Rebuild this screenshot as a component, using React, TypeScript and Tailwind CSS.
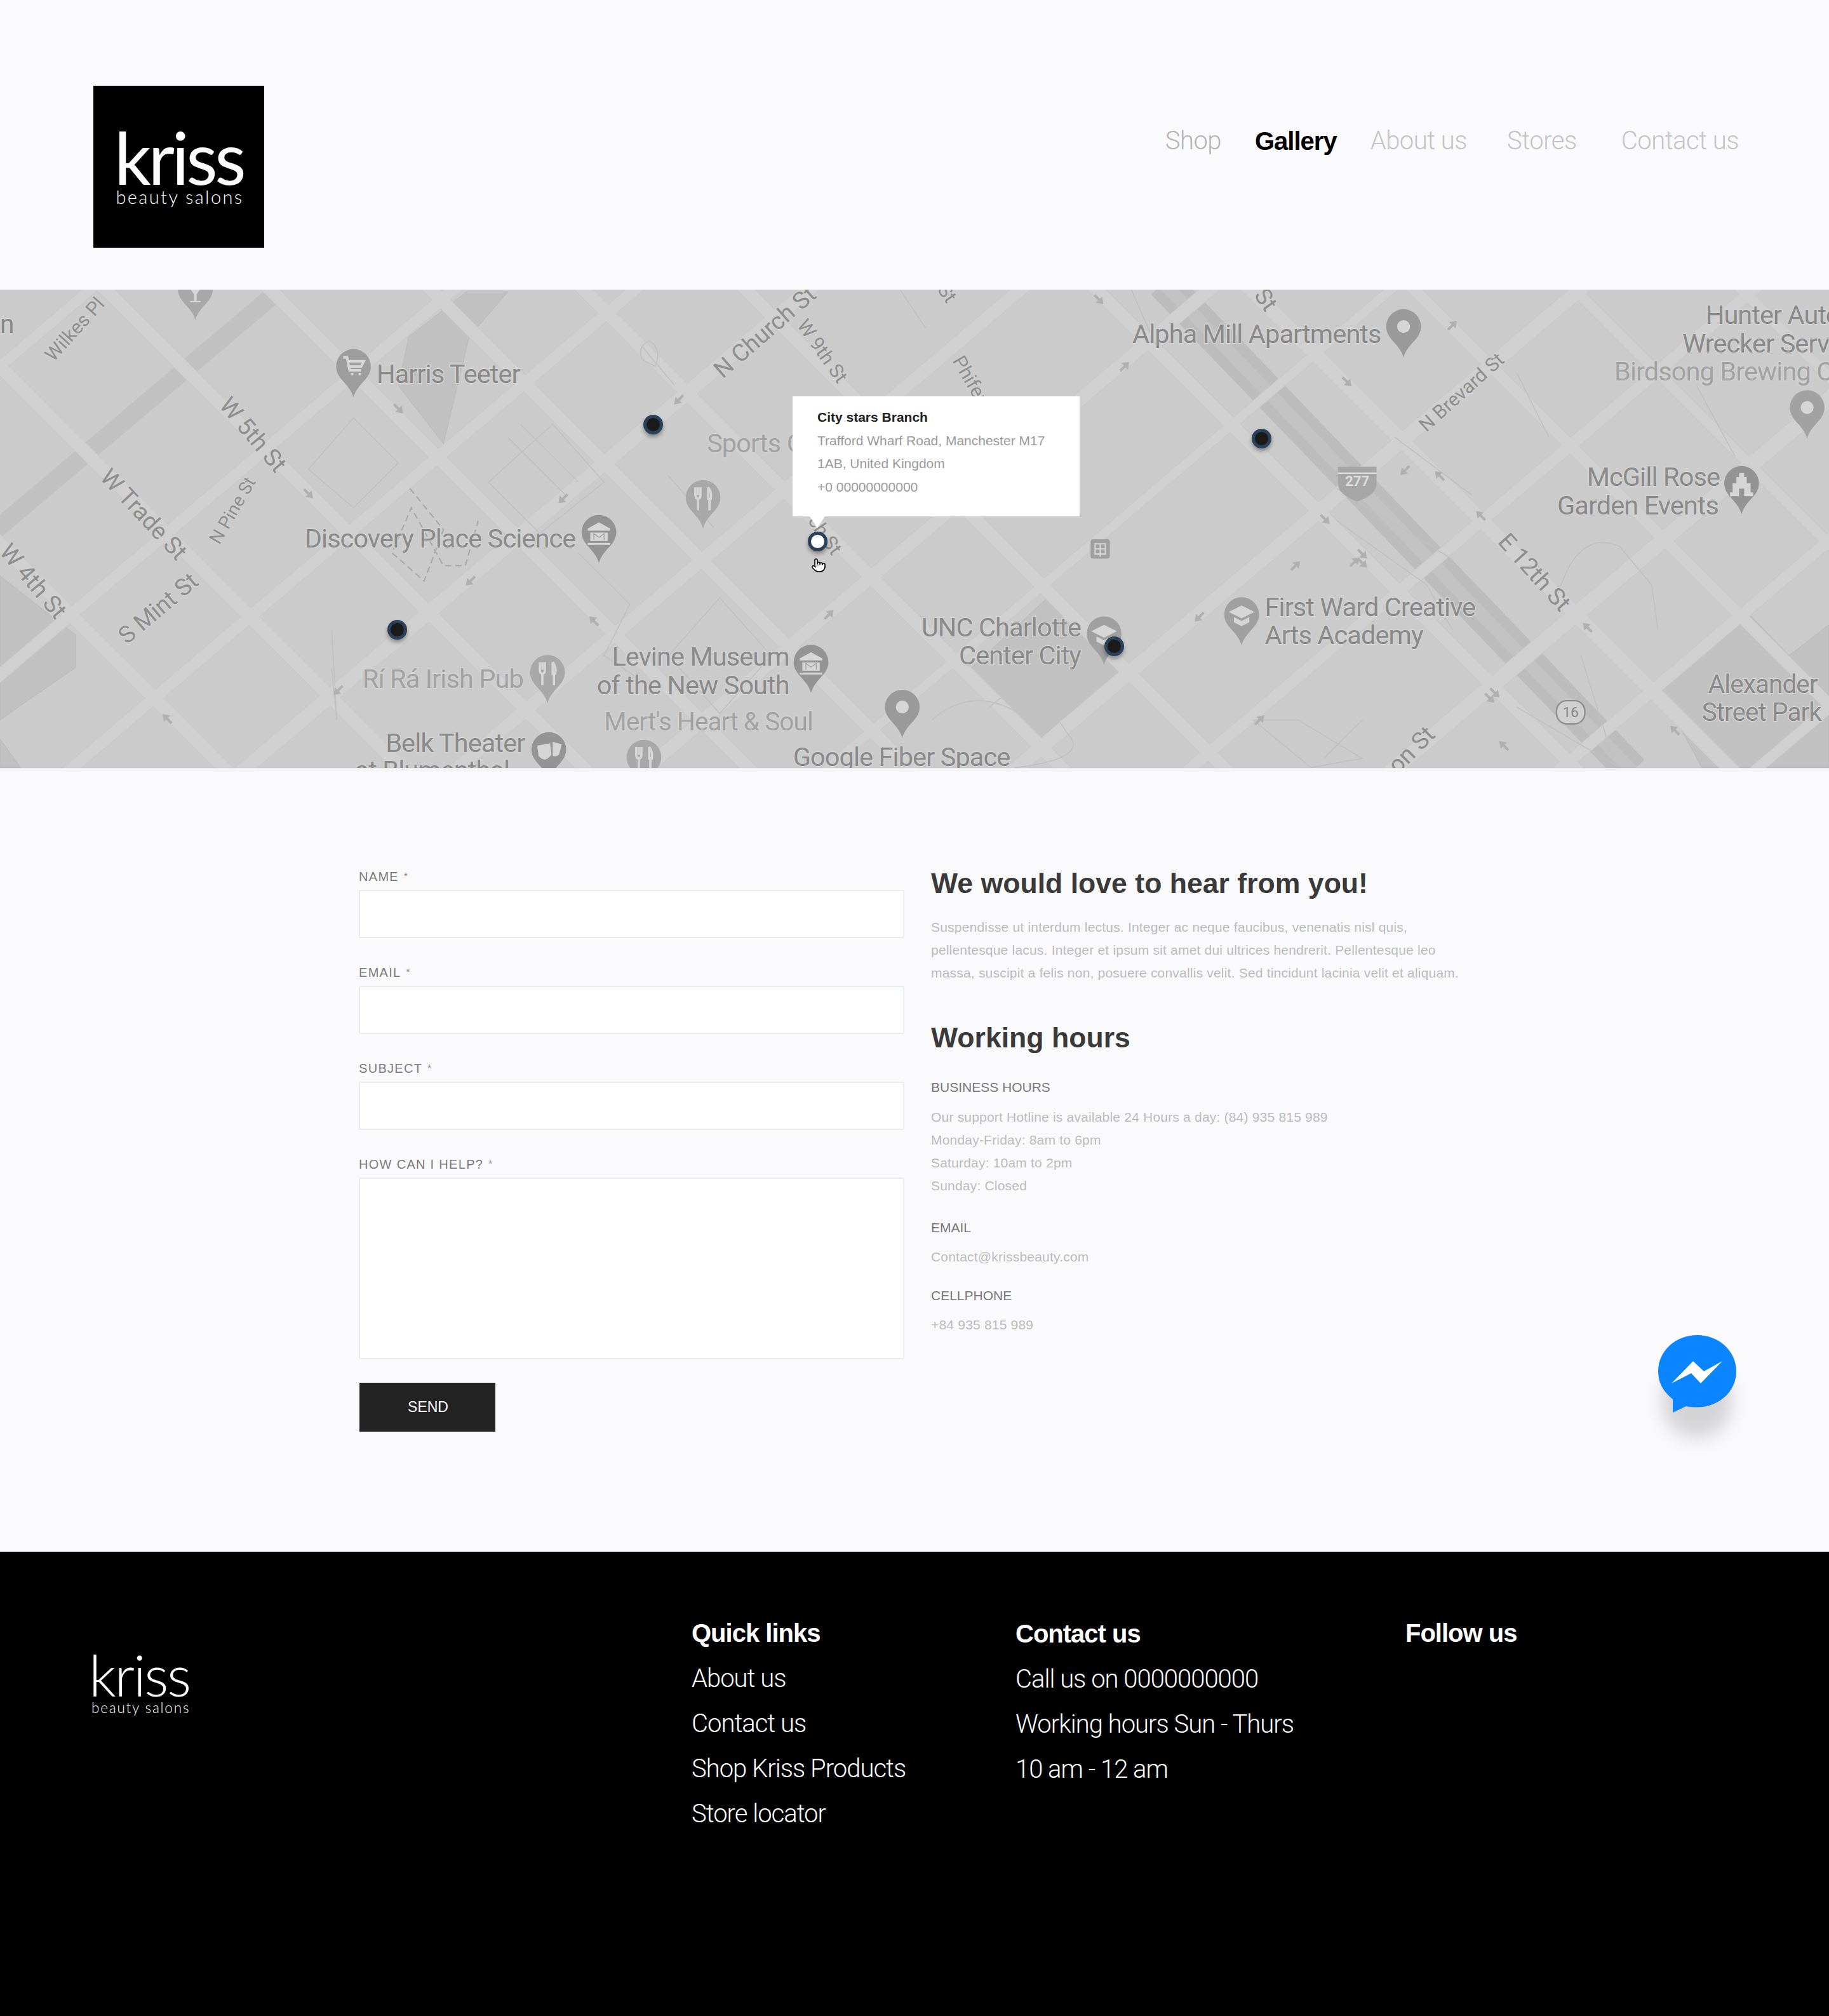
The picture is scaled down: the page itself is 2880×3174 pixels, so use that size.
import { Pointer } from "lucide-react";

const sans = "font-['Liberation_Sans',Arial,sans-serif]";

const familyA = [
  [423, 10], [285, 10], [143, 10], [15, 10], [-110, 10], [-229, 10], [-355, 10], [-628, 10], [-748, 11], [-875, 9], [-1000, 8], [-1130, 8],
];
const familyB = [
  [525, 9], [645, 9], [760, 11], [900, 10], [1025, 10], [1145, 7], [1270, 11], [1385, 9], [1520, 12], [1630, 9], [1760, 8], [285, 8],
];

const areas = [
  "0,448 59,494 59,519 0,560",
  "318,262 363,227 395,227 365,262 345,345 310,300",
  "816,464 875,520 807,576 752,523",
  "1360,477 1392,510 1423,486 1423,597 1324,597 1292,538",
  "0,575 16,597 0,597",
];

const thin = [
  "M258 490 L262 560 L258 520",
  "M700 225 L720 255 M500 270 L525 300",
  "M1040 405 L1110 455 L1130 490 M1040 380 L1130 435 M1145 385 L1085 340",
  "M1210 470 Q1225 410 1260 425 L1285 455 L1290 490 M1010 560 L1060 590 L1020 597 L975 560 Z",
  "M240 365 L275 325 L310 360 L275 395 Z M430 330 L380 375 L420 415 L470 375 Z M395 340 L440 385 M405 330 L450 375",
  "M560 465 L600 510 L560 555 L520 510 Z M450 430 L490 470 L470 510 L500 530 M520 370 L555 410",
  "M770 550 Q800 520 830 570 Q850 590 790 597 M725 560 Q760 530 800 560 M1180 290 L1205 340 M1320 300 L1350 355",
  "M900 270 L880 225 M1030 590 L1060 560 M500 280 Q495 270 505 265 Q515 270 510 285 Z M1180 550 L1260 597 M1230 510 L1255 590",
];

const labels: [string, number, number, number, string, string?][] = [
  ["Harris Teeter", 293, 298, 20.5, "start"],
  ["Alpha Mill Apartments", 881, 267, 20.5, "start"],
  ["Discovery Place Science", 237, 426, 20.5, "start"],
  ["Sports C", 550, 352, 20.5, "start", "#a2a2a2"],
  ["Levine Museum", 614, 518, 20.5, "end"],
  ["of the New South", 614, 540, 20.5, "end"],
  ["Mert's Heart & Soul", 470, 568, 20, "start", "#a2a2a2"],
  ["Rí Rá Irish Pub", 282, 535, 20.5, "start", "#a2a2a2"],
  ["Belk Theater", 300, 585, 20.5, "start"],
  ["at Blumenthal", 276, 606, 20.5, "start"],
  ["UNC Charlotte", 841, 495, 20.5, "end"],
  ["Center City", 841, 517, 20.5, "end"],
  ["First Ward Creative", 984, 479, 20.5, "start"],
  ["Arts Academy", 984, 501, 20.5, "start"],
  ["Google Fiber Space", 617, 596, 20.5, "start"],
  ["McGill Rose", 1338, 378, 20.5, "end"],
  ["Garden Events", 1337, 400, 20.5, "end"],
  ["Hunter Auto", 1327, 252, 20.5, "start"],
  ["Wrecker Serv", 1309, 274, 20.5, "start"],
  ["Birdsong Brewing C", 1256, 296, 20.5, "start", "#a2a2a2"],
  ["Alexander", 1329, 539, 20, "start"],
  ["Street Park", 1324, 561, 20, "start"],
  ["n", 0, 259, 20, "start"],
];

const streets: [string, number, number, number, number][] = [
  ["Wilkes Pl", 58, 256, -48, 15],
  ["W 5th St", 197, 338, 50, 18.5],
  ["W Trade St", 112, 400, 47, 18.5],
  ["N Pine St", 181, 397, -60, 14],
  ["W 4th St", 26, 452, 50, 18.5],
  ["S Mint St", 123, 473, -40, 18.5],
  ["N Church St", 595, 258, -41, 18.5],
  ["W 9th St", 640, 273, 55, 15],
  ["Phifer", 755, 295, 60, 15],
  ["N Brevard St", 1137, 305, -42, 15],
  ["E 12th St", 1194, 445, 48, 18.5],
  ["on St", 1098, 583, -45, 18.5],
  ["St", 985, 233, 55, 18],
  ["St", 737, 228, 55, 15],
  ["ch St", 642, 416, 55, 15],
];

const arrows: [number, number, number][] = [
  [240, 384, 135], [310, 318, 135], [528, 311, 225], [438, 388, 225], [366, 452, 225], [263, 537, 225],
  [462, 483, 315], [130, 559, 315], [645, 478, 45], [855, 233, 135], [875, 285, 45], [1130, 253, 45],
  [1120, 370, 315], [1093, 366, 225], [1152, 401, 315], [1031, 404, 135], [1060, 431, 135], [1054, 437, 45],
  [1060, 438, 135], [1008, 440, 45], [933, 480, 225], [1235, 488, 315], [1163, 539, 135], [1159, 543, 135],
  [980, 560, 45], [1303, 568, 315], [1170, 580, 315], [1048, 297, 135],
];

const pins: [number, number, string, string][] = [
  [275, 286, "cart", "#9d9d9d"],
  [1092, 255, "dot", "#9a9a9a"],
  [466, 415, "museum", "#949494"],
  [631, 516, "museum", "#949494"],
  [426, 524, "fork", "#a8a8a8"],
  [427, 584, "theater", "#949494"],
  [547, 388, "fork", "#a8a8a8"],
  [501, 590, "fork", "#a8a8a8"],
  [859, 494, "grad", "#a0a0a0"],
  [966, 479, "grad", "#a0a0a0"],
  [702, 551, "dot", "#9a9a9a"],
  [1355, 377, "castle", "#949494"],
  [1406, 318, "dot", "#a2a2a2"],
  [152, 226, "dot2", "#a8a8a8"],
];

function PinIcon({ kind }: { kind: string }) {
  if (kind === "dot") return <circle cx="0" cy="-1" r="5" fill="#d6d6d6" />;
  if (kind === "dot2") return <path d="M-5 -3 H5 L1 3 V8 H4 V9 H-4 V8 H-1 V3 Z" fill="#d6d6d6" />;
  if (kind === "cart")
    return <path d="M-8 -8 H-5 L-3 2 H6 M-4 -5 H8 L6 -1 H-3 M-2 5 h2 M4 5 h2" stroke="#d6d6d6" strokeWidth="2" fill="none" />;
  if (kind === "museum")
    return <path d="M0 -9 L9 -4 V-2 H-9 V-4 Z M-7 -1 H7 V6 H-7 Z M-9 7 H9 V9 H-9 Z M-4 5 V0 L0 3 L4 0 V5" fill="#d6d6d6" stroke="#949494" strokeWidth="0.5" />;
  if (kind === "fork")
    return <path d="M-6 -9 V-3 Q-6 0 -4 0 V9 M-4 -9 V-3 M-2 -9 V-3 Q-2 0 -4 0 M4 -9 Q7 -5 6 0 H4 V-9 M5 0 V9" stroke="#d6d6d6" strokeWidth="1.8" fill="none" />;
  if (kind === "theater")
    return <path d="M-9 -4 L1 -6 L2 3 Q-3 10 -8 4 Z M3 -7 L10 -5 L8 3 Q6 5 3 4 Z" fill="#d6d6d6" />;
  if (kind === "grad")
    return <path d="M0 -8 L10 -3 L0 2 L-10 -3 Z M-6 1 V5 L0 8 L6 5 V1 L0 4 Z" fill="#d6d6d6" />;
  return <path d="M-2 -9 H2 V-6 H4 V-1 H7 V6 H9 V9 H-9 V6 H-7 V-1 H-4 V-6 H-2 Z M-2 3 V9 H2 V3 Z" fill="#d6d6d6" fillRule="evenodd" />;
}

function MapDrawing() {
  return (
    <svg viewBox="0 225.3 1423 372" width="2880" height="753" className="block" style={{ fontFamily: "Roboto, sans-serif" }}>
      <rect x="0" y="225" width="1423" height="373" fill="#cbcbcb" />
      {areas.map((p) => (
        <polygon key={p} points={p} fill="#c1c1c1" stroke="#bababa" strokeWidth="0.5" />
      ))}
      <line x1="218" y1="225" x2="-10" y2="418" stroke="#c1c1c1" strokeWidth="14" />
      <line x1="905" y1="220" x2="1270" y2="600" stroke="#bcbcbc" strokeWidth="26" />
      <line x1="905" y1="220" x2="1270" y2="600" stroke="#c2c2c2" strokeWidth="10" />
      {familyA.map(([c, w]) => (
        <line key={c} x1={200 - c} y1={200} x2={620 - c} y2={620} stroke="#c7c7c7" strokeWidth={w + 0.8} />
      ))}
      {familyB.map(([d, w]) => (
        <line key={d} x1={(d - 200) / 0.85} y1={200} x2={(d - 620) / 0.85} y2={620} stroke="#c7c7c7" strokeWidth={w + 0.8} />
      ))}
      {familyA.map(([c, w]) => (
        <line key={c} x1={200 - c} y1={200} x2={620 - c} y2={620} stroke="#d0d0d0" strokeWidth={w} />
      ))}
      {familyB.map(([d, w]) => (
        <line key={d} x1={(d - 200) / 0.85} y1={200} x2={(d - 620) / 0.85} y2={620} stroke="#d0d0d0" strokeWidth={w} />
      ))}
      {thin.map((d) => (
        <path key={d} d={d} fill="none" stroke="#c0c0c0" strokeWidth="0.8" />
      ))}
      <path d="M319 380 L345 412 L330 452 L305 430 L320 395 L345 440 L362 440 L372 405" fill="none" stroke="#a8a8a8" strokeWidth="1" strokeDasharray="5 3" />
      {arrows.map(([x, y, r], i) => (
        <path key={i} transform={`translate(${x} ${y}) rotate(${r})`} d="M0 -5 L3.5 0 L1 0 L1 5 L-1 5 L-1 0 L-3.5 0 Z" fill="#b0b0b0" />
      ))}
      <g transform="translate(1056 372)">
        <path d="M-15 -9 H15 V4 Q15 13 0 18 Q-15 13 -15 4 Z" fill="#a6a6a6" />
        <line x1="-15" y1="-4" x2="15" y2="-4" stroke="#d8d8d8" strokeWidth="1.2" />
        <text x="0" y="6" fontSize="11" fontWeight="700" textAnchor="middle" fill="#dcdcdc">277</text>
      </g>
      <g transform="translate(1222 554)">
        <rect x="-11" y="-9" width="22" height="18" rx="8" fill="#d0d0d0" stroke="#8f8f8f" strokeWidth="1.2" />
        <text x="0" y="4" fontSize="11" textAnchor="middle" fill="#858585">16</text>
      </g>
      <g transform="translate(856 427)">
        <rect x="-7.5" y="-7.5" width="15" height="15" rx="2" fill="#a0a0a0" />
        <path d="M-4 -4 H4 V4 H-4 Z M-4 0 H4 M0 -4 V6" stroke="#d8d8d8" fill="none" />
      </g>
      {streets.map(([t, x, y, r, s]) => (
        <text key={t + x} transform={`translate(${x} ${y}) rotate(${r})`} fontSize={s} textAnchor="middle" dominantBaseline="central" fill="#8e8e8e" stroke="#d0d0d0" strokeWidth="1.5" paintOrder="stroke">
          {t}
        </text>
      ))}
      {labels.map(([t, x, y, s, a, c]) => (
        <text key={t} x={x} y={y} fontSize={s} letterSpacing="-0.45" textAnchor={a as "start" | "end"} fill={c ?? "#8a8a8a"} stroke="#d2d2d2" strokeWidth="1.5" paintOrder="stroke">
          {t}
        </text>
      ))}
      {pins.map(([x, y, k, c], i) => (
        <g key={i} transform={`translate(${x} ${y})`}>
          <path d="M0 23 C-3 12 -13.5 9 -13.5 -1 A13.5 13.5 0 1 1 13.5 -1 C13.5 9 3 12 0 23 Z" fill={c} />
          <PinIcon kind={k} />
        </g>
      ))}
    </svg>
  );
}

function Marker({ className }: { className: string }) {
  return <div className={`absolute w-[31px] h-[31px] rounded-full border-[5px] border-[#2b4159] bg-[#1a1a1a] shadow-[0_4px_6px_rgba(0,0,0,0.35)] ${className}`} />;
}

function Header() {
  return (
    <header className="h-[456px] flex items-start justify-between pl-[147px]">
      <div className="mt-[135px] w-[269px] h-[255px] bg-black flex flex-col items-center pt-[64px] text-white font-['Lato',sans-serif]">
        <div className="text-[114px] leading-[96px] font-normal tracking-[-4.5px]">kriss</div>
        <div className="ml-[3px] text-[29px] leading-[34px] mt-[-2px] font-light tracking-[2.4px] whitespace-nowrap">beauty salons</div>
      </div>
      <nav className="mt-[198px] flex text-[40px] leading-[48px] tracking-[-0.5px] text-[#c4c4c4] whitespace-nowrap font-['Roboto',sans-serif] font-light pr-[142px]">
        <span className="text-[#b4b4b4]">Shop</span>
        <span className={`ml-[53px] font-bold text-black tracking-[-1px] ${sans}`}>Gallery</span>
        <span className="ml-[53px]">About us</span>
        <span className="ml-[63px]">Stores</span>
        <span className="ml-[70px]">Contact us</span>
      </nav>
    </header>
  );
}

function MapSection() {
  return (
    <section className={`relative h-[753px] overflow-hidden ${sans}`}>
      <MapDrawing />
      <Marker className="left-[1013px] top-[197px]" />
      <Marker className="left-[1971px] top-[219px]" />
      <Marker className="left-[610px] top-[520px]" />
      <Marker className="left-[1739px] top-[546px]" />
      <div className="absolute left-[1248px] top-[168px] w-[452px] h-[189px] bg-white pl-[39px] pt-[15px] text-[21px] leading-[36.5px] text-[#9a9a9a] whitespace-nowrap">
        <div className="font-bold text-[#222]">City stars Branch</div>
        <div>Trafford Wharf Road, Manchester M17</div>
        <div>1AB, United Kingdom</div>
        <div>+0 00000000000</div>
      </div>
      <div className="absolute left-[1275px] top-[357px] w-0 h-0 border-l-[12px] border-r-[12px] border-t-[18px] border-l-transparent border-r-transparent border-t-white" />
      <div className="absolute left-[1272px] top-[381px] w-[31px] h-[31px] rounded-full border-[5px] border-[#2b4159] bg-white shadow-[0_4px_6px_rgba(0,0,0,0.35)]" />
      <Pointer className="absolute left-[1277px] top-[422px] w-[24px] h-[24px] text-black" fill="white" strokeWidth={1.6} />
    </section>
  );
}

function Field({ label, tall }: { label: string; tall?: boolean }) {
  return (
    <div className={tall ? "" : "mb-[34px]"}>
      <div className="h-[41px] leading-[38px] text-[20px] tracking-[1.3px] text-[#7a7a7a]">
        {label}
        <span className="ml-[8px] text-[15px] align-[3px]">*</span>
      </div>
      <div className={`${tall ? "h-[286px]" : "h-[76px]"} bg-white border-2 border-[#e8ebef] rounded-[3px]`} />
    </div>
  );
}

function Main() {
  return (
    <main className={`relative h-[1230px] flex pl-[565px] ${sans}`}>
      <div className="w-[859px] pt-[147px]">
        <Field label="NAME" />
        <Field label="EMAIL" />
        <Field label="SUBJECT" />
        <Field label="HOW CAN I HELP?" tall />
        <div className="mt-[37px] ml-[1px] w-[214px] h-[77px] bg-[#232323] text-white text-[23px] flex items-center justify-center pl-[2px]">SEND</div>
      </div>
      <div className="ml-[42px] pt-[148px] text-[21px] tracking-[0.2px] leading-[36px] text-[#bcbcbc] whitespace-nowrap">
        <h1 className="text-[44.6px] tracking-normal leading-[60px] font-bold text-[#3a3a3a]">We would love to hear from you!</h1>
        <p className="mt-[21px]">
          Suspendisse ut interdum lectus. Integer ac neque faucibus, venenatis nisl quis,
          <br />
          pellentesque lacus. Integer et ipsum sit amet dui ultrices hendrerit. Pellentesque leo
          <br />
          massa, suscipit a felis non, posuere convallis velit. Sed tincidunt lacinia velit et aliquam.
        </p>
        <h2 className="mt-[54px] text-[44.6px] tracking-normal leading-[60px] font-bold text-[#3a3a3a]">Working hours</h2>
        <div className="mt-[30px] text-[#777] tracking-normal">BUSINESS HOURS</div>
        <p className="mt-[11px]">
          Our support Hotline is available 24 Hours a day: (84) 935 815 989
          <br />
          Monday-Friday: 8am to 6pm
          <br />
          Saturday: 10am to 2pm
          <br />
          Sunday: Closed
        </p>
        <div className="mt-[30px] text-[#777] tracking-normal">EMAIL</div>
        <p className="mt-[10px]">Contact@krissbeauty.com</p>
        <div className="mt-[25px] text-[#777] tracking-normal">CELLPHONE</div>
        <p className="mt-[10px]">+84 935 815 989</p>
      </div>
      <div className="absolute left-[2611px] top-[889px]">
        <div className="absolute left-[6px] top-[44px] w-[110px] h-[118px] rounded-full bg-black/15 blur-[14px]" />
        <svg viewBox="0 0 123 122" width="123" height="122" className="relative block">
          <path d="M61.5 0 C27.5 0 0 25 0 57 C0 78 11 91 23 101 L23 122 L44 112 C49 113 55 113.5 61.5 113.5 C95.5 113.5 123 89 123 57 C123 25 95.5 0 61.5 0 Z" fill="#0a84ff" />
          <path d="M21 76 L55 41 L72 57 L101 41 L67 76 L52 60 Z" fill="#fff" />
        </svg>
      </div>
    </main>
  );
}

function Footer() {
  const row = "font-['Roboto',sans-serif] font-light tracking-[-1px]";
  const bold = `font-bold tracking-[-1px] ${sans}`;
  return (
    <footer className="relative h-[731px] bg-black text-white flex whitespace-nowrap text-[40px] leading-[71px]">
      <div className="w-[1089px] pl-[140px] pt-[150px] font-['Lato',sans-serif]">
        <div className="text-[90px] leading-[86px] font-light tracking-[-2.5px]">kriss</div>
        <div className="ml-[4px] text-[22.5px] leading-[24px] mt-[-2px] font-light tracking-[1.8px]">beauty salons</div>
      </div>
      <div className="w-[510px] pt-[93px]">
        <div className={bold}>Quick links</div>
        <div className={row}>About us</div>
        <div className={row}>Contact us</div>
        <div className={row}>Shop Kriss Products</div>
        <div className={row}>Store locator</div>
      </div>
      <div className="w-[614px] pt-[94px]">
        <div className={bold}>Contact us</div>
        <div className={row}>Call us on 0000000000</div>
        <div className={row}>Working hours Sun - Thurs</div>
        <div className={row}>10 am - 12 am</div>
      </div>
      <div className="pt-[93px]">
        <div className={bold}>Follow us</div>
      </div>
    </footer>
  );
}

export default function App() {
  return (
    <div className="w-[2880px] bg-[#fafafc]">
      <Header />
      <MapSection />
      <div className="h-[4px] bg-[#eeeef0]" />
      <Main />
      <Footer />
    </div>
  );
}
